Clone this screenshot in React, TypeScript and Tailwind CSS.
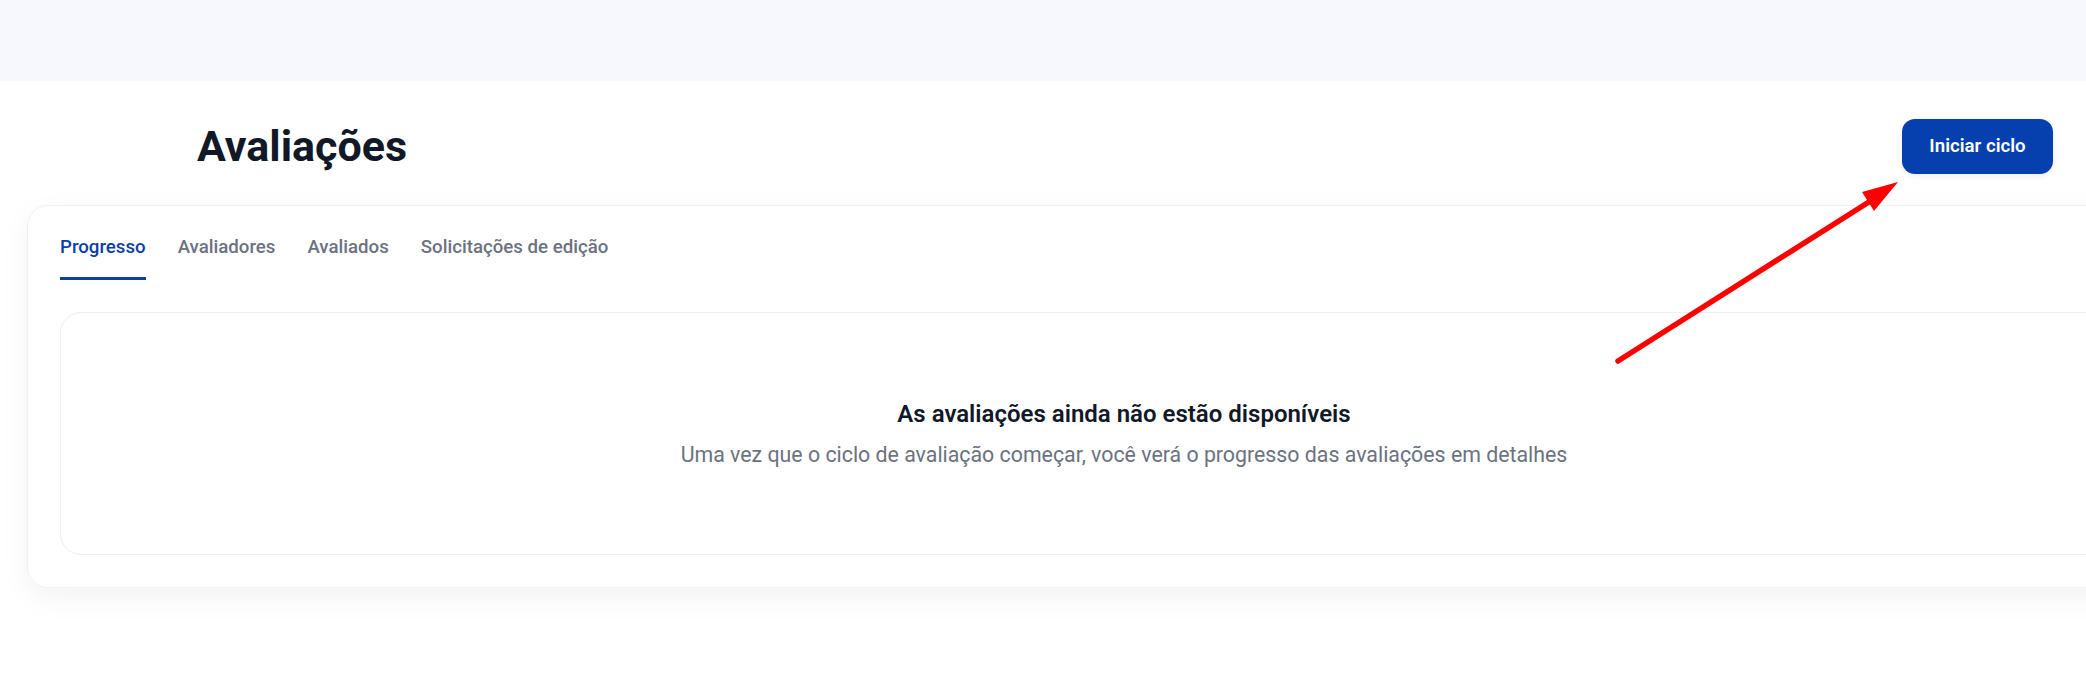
import React from "react";

export default function App() {
  const tabs = ["Progresso", "Avaliadores", "Avaliados", "Solicitações de edição"];
  return (
    <div className="relative w-[2086px] h-[682px] overflow-hidden bg-white font-['Roboto',_'Liberation_Sans',_sans-serif]">
      <div className="h-[81px] bg-[#f7f8fe]" />
      <div className="flex h-[124px] items-center justify-between pl-[197px] pr-[33px] pt-[6px]">
        <h1 className="text-[43px] font-bold leading-none text-[#111827]">Avaliações</h1>
        <button className="h-[55px] w-[151px] rounded-[13px] bg-[#0540ae] text-[18.67px] font-semibold text-white shadow-[0_2px_6px_rgba(0,0,0,0.08)]">
          Iniciar ciclo
        </button>
      </div>
      <div className="ml-[27px] w-[2194px] rounded-[21px] border border-[#f1f2f4] bg-white px-[32px] pt-[27px] pb-[32px] shadow-[0_10px_30px_rgba(0,0,0,0.05)]">
        <div className="flex gap-[32px]">
          {tabs.map((t, i) => (
            <div
              key={t}
              className={
                i === 0
                  ? "border-b-[3px] border-[#0b3ea9] pb-[16px] text-[18.67px] leading-[28px] font-medium text-[#0b3ea9]"
                  : "border-b-[3px] border-transparent pb-[16px] text-[18.67px] leading-[28px] font-medium text-[#6b7280]"
              }
            >
              {t}
            </div>
          ))}
        </div>
        <div className="mt-[32px] flex h-[243px] flex-col items-center justify-center gap-[12px] rounded-[21px] border border-[#eceef1] bg-white">
          <div className="text-[24px] leading-[30px] font-semibold text-[#111827]">
            As avaliações ainda não estão disponíveis
          </div>
          <div className="text-[21.33px] leading-[28px] text-[#6b7280]">
            Uma vez que o ciclo de avaliação começar, você verá o progresso das avaliações em detalhes
          </div>
        </div>
      </div>
      <svg className="pointer-events-none absolute left-0 top-0" width="2086" height="682" viewBox="0 0 2086 682">
        <line x1="1618" y1="361" x2="1872" y2="200" stroke="#ff0000" strokeWidth="5.5" strokeLinecap="round" />
        <polygon points="1898,182 1862,192 1874,211" fill="#ff0000" />
      </svg>
    </div>
  );
}
